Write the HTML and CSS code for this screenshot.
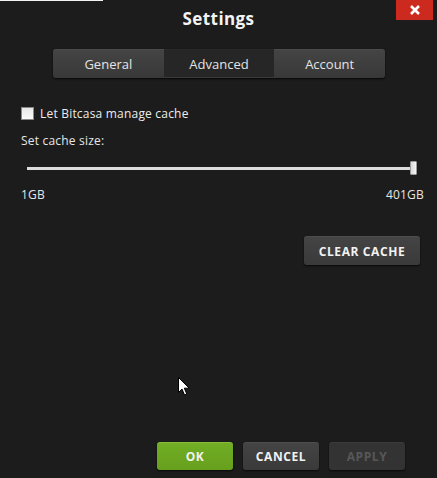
FILE: index.html
```html
<!DOCTYPE html>
<html>
<head>
<meta charset="utf-8">
<link rel="stylesheet" href="styles.css">
</head>
<body>
<div class="window">
  <div class="topline"></div>
  <header class="header">
    <h1 class="title">Settings</h1>
    <button class="close" aria-label="Close">
      <svg width="12" height="10" viewBox="0 0 12 10"><path d="M2 1 L10 9 M10 1 L2 9" stroke="#fff" stroke-width="2.6" stroke-linecap="butt"/></svg>
    </button>
  </header>
  <nav class="tabs">
    <div class="tab">General</div>
    <div class="tab active">Advanced</div>
    <div class="tab">Account</div>
  </nav>
  <section class="content">
    <label class="check-row"><span class="checkbox"></span><span>Let Bitcasa manage cache</span></label>
    <div class="label">Set cache size:</div>
    <div class="slider">
      <div class="track"></div>
      <div class="thumb"></div>
    </div>
    <div class="range-labels"><span>1GB</span><span>401GB</span></div>
    <div class="clear-row"><button class="btn">CLEAR CACHE</button></div>
  </section>
  <div class="spacer">
    <svg class="cursor" width="13" height="19" viewBox="0 0 13 19"><path d="M0.5 0.5 L0.5 15.5 L4 12 L6.5 18 L8.8 17 L6.3 11.2 L11.2 11.2 Z" fill="#fff" stroke="#000" stroke-width="1"/></svg>
  </div>
  <footer class="footer">
    <button class="btn ok">OK</button>
    <button class="btn">CANCEL</button>
    <button class="btn disabled">APPLY</button>
  </footer>
</div>
</body>
</html>
```
FILE: styles.css
```css
* { box-sizing: border-box; }
html, body { margin: 0; padding: 0; }
body {
  background: #1c1c1c;
  font-family: "Open Sans", "DejaVu Sans", sans-serif;
  color: #e6e6e6;
  width: 437px;
  height: 478px;
  overflow: hidden;
}
.window {
  display: flex;
  flex-direction: column;
  height: 478px;
}
.topline {
  width: 103px;
  height: 1px;
  background: #f2f2f2;
}
.header {
  position: relative;
  height: 37px;
  display: flex;
  justify-content: center;
}
.title {
  margin: 0;
  padding-top: 6px;
  font-size: 17px;
  font-weight: 700;
  color: #f4f4f4;
  letter-spacing: 0.4px;
}
.close {
  position: absolute;
  top: -1px;
  left: 396px;
  width: 37px;
  height: 20px;
  border: 0;
  padding: 0;
  background: #cc2a1f;
  display: flex;
  align-items: center;
  justify-content: center;
}
.tabs {
  margin-top: 11px;
  margin-left: 53px;
  width: 332px;
  height: 29px;
  display: flex;
  border-radius: 3px;
  box-shadow: 0 1px 2px rgba(0,0,0,0.8);
}
.tab {
  flex: 1;
  display: flex;
  align-items: center;
  justify-content: center;
  font-size: 13px;
  color: #e4e4e4;
  background: linear-gradient(#444, #383838);
  border-top: 1px solid #4c4c4c;
}
.tab:first-child { border-radius: 3px 0 0 3px; }
.tab:last-child { border-radius: 0 3px 3px 0; }
.tab.active {
  background: #262626;
  border-top: 1px solid #2a2a2a;
  border-bottom: 1px solid #3a3a3a;
}
.content {
  padding: 0 13px 0 21px;
  display: flex;
  flex-direction: column;
}
.check-row {
  margin-top: 27px;
  display: flex;
  align-items: center;
  gap: 6px;
  font-size: 12px;
  letter-spacing: 0.2px;
  color: #ececec;
}
.checkbox {
  width: 13px;
  height: 13px;
  background: linear-gradient(#e8e8e8, #fafafa);
  border: 1px solid #888;
}
.label {
  margin-top: 10px;
  font-size: 12px;
  letter-spacing: 0.2px;
  color: #e6e6e6;
}
.slider {
  position: relative;
  margin-top: 12px;
  margin-left: 6px;
  width: 390px;
  height: 14px;
}
.track {
  position: absolute;
  left: 0;
  right: 0;
  top: 6px;
  height: 3px;
  background: #dcdcdc;
}
.thumb {
  position: absolute;
  left: 383px;
  top: 0;
  width: 7px;
  height: 14px;
  background: linear-gradient(90deg, #d8d8d8, #f4f4f4);
  border: 1px solid #999;
  border-radius: 1px;
}
.range-labels {
  margin-top: 11px;
  display: flex;
  justify-content: space-between;
  font-size: 12px;
  letter-spacing: 0.2px;
  color: #e6e6e6;
}
.clear-row {
  margin-top: 33px;
  display: flex;
  justify-content: flex-end;
  padding-right: 4px;
}
.btn {
  height: 29px;
  border: 0;
  border-radius: 3px;
  background: linear-gradient(#444, #3a3a3a);
  border-top: 1px solid #4e4e4e;
  color: #f2f2f2;
  font-family: "Open Sans", "DejaVu Sans", sans-serif;
  font-weight: 700;
  font-size: 12px;
  letter-spacing: 0.6px;
  box-shadow: 0 1px 2px rgba(0,0,0,0.7);
  padding: 0;
}
.clear-row .btn { width: 116px; }
.spacer {
  flex: 1;
  position: relative;
}
.cursor {
  position: absolute;
  left: 178px;
  top: 112px;
}
.footer {
  display: flex;
  gap: 10px;
  padding-left: 157px;
  margin-bottom: 8px;
}
.footer .btn { width: 76px; height: 28px; }
.btn.ok {
  background: linear-gradient(#72ad25, #66a01d);
  border-top: 1px solid #84bd38;
}
.btn.disabled {
  color: #585858;
  background: #333;
  border-top: 1px solid #3b3b3b;
}
```
